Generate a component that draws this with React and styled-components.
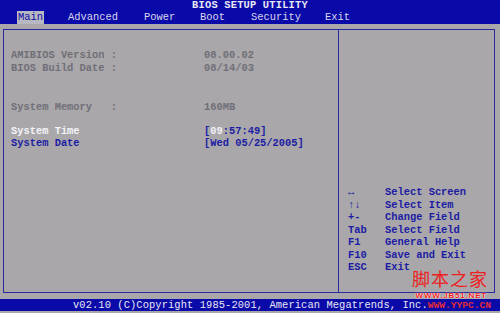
import React from "react";
import styled, { createGlobalStyle } from "styled-components";

const GlobalStyle = createGlobalStyle`
  html, body {
    margin: 0;
    padding: 0;
    background: #a9a7a9;
  }
`;

const blue = "#0a0aa8";
const gray = "#a9a7a9";
const mono = `"Liberation Mono", "DejaVu Sans Mono", monospace`;

const Screen = styled.div`
  position: relative;
  width: 500px;
  height: 313px;
  background: ${gray};
  font-family: ${mono};
  font-size: 10.4px;
  line-height: 12.5px;
  font-weight: bold;
  display: flex;
  flex-direction: column;
  overflow: hidden;
`;

const Header = styled.div`
  height: 24px;
  background: ${blue};
  display: flex;
  flex-direction: column;
  color: #e8e8f4;
`;

const Title = styled.div`
  height: 11px;
  line-height: 11px;
  text-align: center;
  letter-spacing: 0.2px;
`;

const MenuBar = styled.div`
  display: flex;
  padding-left: 17px;
  height: 13px;
  align-items: stretch;
`;

const MenuItem = styled.div`
  line-height: 13px;
  width: ${(p) => p.$w}px;
  font-weight: normal;
  span {
    display: inline-block;
    padding: 0 1px;
    background: ${(p) => (p.$active ? "#b8b8c0" : "transparent")};
    color: ${(p) => (p.$active ? blue : "#d8d8ec")};
  }
`;

const Body = styled.div`
  flex: 1;
  padding: 5px 5px 6px 3px;
  display: flex;
`;

const Frame = styled.div`
  flex: 1;
  border: 1px solid #2a2aa0;
  display: grid;
  grid-template-columns: 335px 1fr;
`;

const MainPanel = styled.div`
  border-right: 1px solid #2a2aa0;
  padding: 19px 0 0 7px;
`;

const Row = styled.div`
  display: grid;
  grid-template-columns: 193px 1fr;
  margin-top: ${(p) => p.$gap || 0}px;
  color: ${(p) => p.$color || "#706f78"};
  white-space: pre;
`;

const Value = styled.span`
  color: ${(p) => p.$color || "#706f78"};
  b {
    color: #f0f0f8;
  }
`;

const HelpPanel = styled.div`
  padding: 156px 0 0 9px;
  color: #1c1ca4;
`;

const HelpRow = styled.div`
  display: grid;
  grid-template-columns: 37px 1fr;
`;

const Footer = styled.div`
  height: 12px;
  line-height: 12px;
  background: ${blue};
  color: #e8e8f4;
  padding-left: 73px;
  margin-bottom: 2px;
  white-space: nowrap;
  font-weight: normal;
  letter-spacing: 0.1px;
`;

const FooterMark = styled.span`
  color: #e02a3a;
  font-weight: bold;
  font-size: 9.6px;
  letter-spacing: 0;
`;

const Watermark = styled.div`
  position: absolute;
  right: 10px;
  top: 269px;
  display: flex;
  flex-direction: column;
  align-items: flex-end;
  color: #ee2020;
  font-family: "Noto Sans CJK SC", sans-serif;
  font-weight: normal;
`;

const MarkBig = styled.div`
  font-size: 18px;
  line-height: 18px;
  height: 18px;
  letter-spacing: 1px;
  margin-right: 2px;
`;

const MarkSmall = styled.div`
  font-family: "Liberation Sans", sans-serif;
  font-size: 8px;
  line-height: 8px;
  font-weight: bold;
  letter-spacing: 0.8px;
  margin: 5px 3px 0 0;
  text-shadow: 0 0 1px #fff, 0 0 1px #fff;
`;

const menu = [
  ["Main", 50, true],
  ["Advanced", 76],
  ["Power", 56],
  ["Boot", 51],
  ["Security", 74],
  ["Exit", 30],
];

const help = [
  ["\u2194", "Select Screen"],
  ["\u2191\u2193", "Select Item"],
  ["+-", "Change Field"],
  ["Tab", "Select Field"],
  ["F1", "General Help"],
  ["F10", "Save and Exit"],
  ["ESC", "Exit"],
];

export default function App() {
  return (
    <>
      <GlobalStyle />
      <Screen>
        <Header>
          <Title>BIOS SETUP UTILITY</Title>
          <MenuBar>
            {menu.map(([name, w, active]) => (
              <MenuItem key={name} $w={w} $active={active}>
                <span>{name}</span>
              </MenuItem>
            ))}
          </MenuBar>
        </Header>
        <Body>
          <Frame>
            <MainPanel>
              <Row>
                <span>AMIBIOS Version :</span>
                <Value>08.00.02</Value>
              </Row>
              <Row>
                <span>BIOS Build Date :</span>
                <Value>08/14/03</Value>
              </Row>
              <Row $gap={27}>
                <span>System Memory   :</span>
                <Value>160MB</Value>
              </Row>
              <Row $gap={11} $color="#f4f4fa">
                <span>System Time</span>
                <Value $color="#1c1ca4">
                  [<b>09</b>:57:49]
                </Value>
              </Row>
              <Row $color="#1c1ca4">
                <span>System Date</span>
                <Value $color="#1c1ca4">[Wed 05/25/2005]</Value>
              </Row>
            </MainPanel>
            <HelpPanel>
              {help.map(([k, d]) => (
                <HelpRow key={d}>
                  <span>{k}</span>
                  <span>{d}</span>
                </HelpRow>
              ))}
            </HelpPanel>
          </Frame>
        </Body>
        <Footer>
          v02.10 (C)Copyright 1985-2001, American Megatrends, Inc.
          <FooterMark>WWW.YYPC.CN</FooterMark>
        </Footer>
        <Watermark>
          <MarkBig>脚本之家</MarkBig>
          <MarkSmall>WWW.JB51.NET</MarkSmall>
        </Watermark>
      </Screen>
    </>
  );
}
